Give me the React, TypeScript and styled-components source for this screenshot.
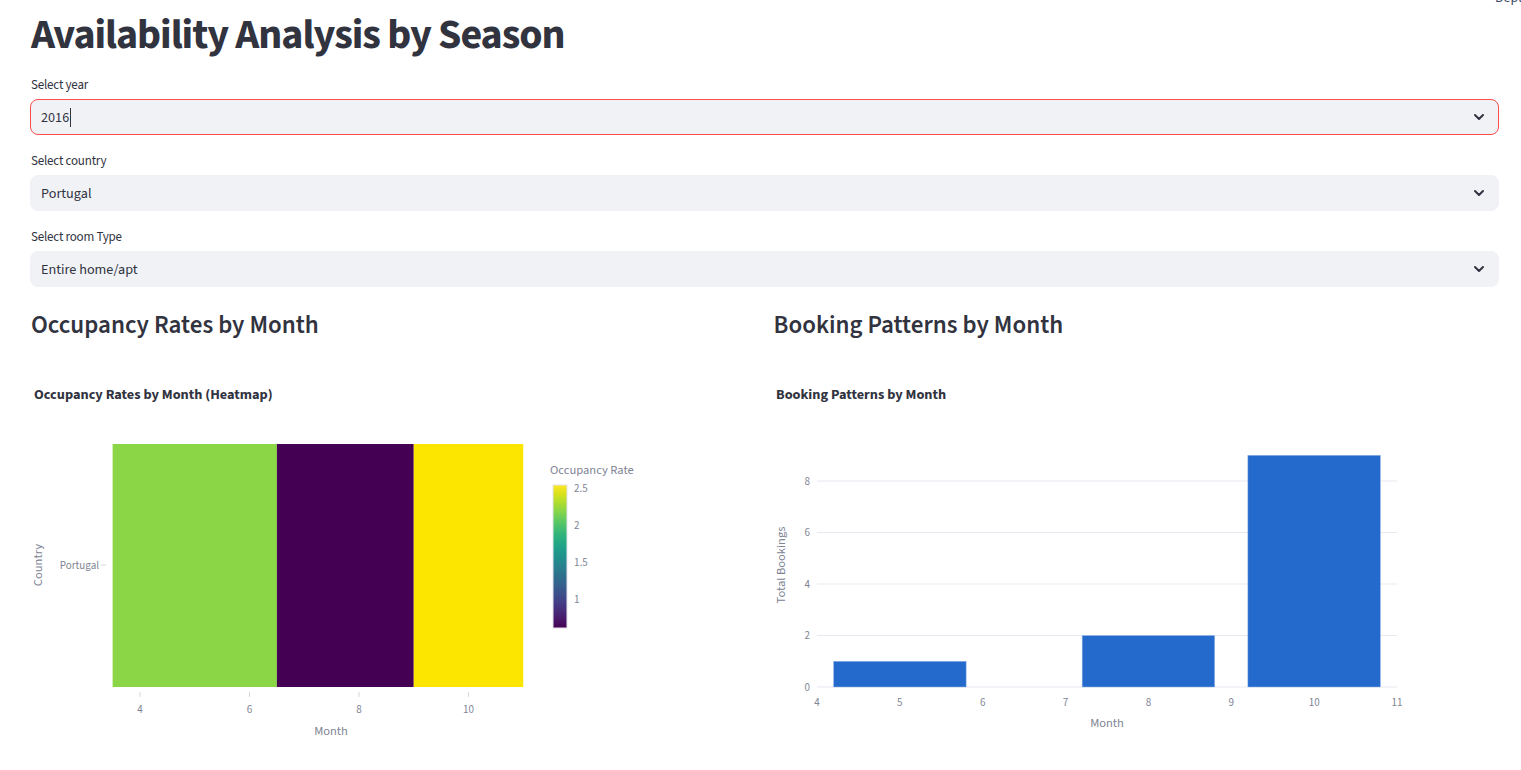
import React from 'react';
import styled, { createGlobalStyle } from 'styled-components';

const FONT = `'Source Sans Pro', 'Source Sans 3', Lato, 'Noto Sans', sans-serif`;
const TEXT = '#31333F';
const MUTED = '#808495';

const GlobalStyle = createGlobalStyle`
  html, body {
    margin: 0;
    padding: 0;
    background: #ffffff;
    overflow: hidden;
  }
  body {
    font-family: ${FONT};
    color: ${TEXT};
  }
`;

const Page = styled.div`
  position: relative;
  width: 1521px;
  height: 770px;
  box-sizing: border-box;
  padding: 9px 22px 0 30px;
  display: flex;
  flex-direction: column;
`;

const DeployTag = styled.div`
  position: absolute;
  top: -12px;
  left: 1495px;
  font-size: 14px;
  color: #3b4a6b;
  white-space: nowrap;
`;

const Title = styled.h1`
  margin: 0 0 13px 0;
  padding-left: 1px;
  font-size: 42px;
  line-height: 53px;
  font-weight: 700;
  letter-spacing: -1.05px;
  color: ${TEXT};
`;

const Form = styled.div`
  display: flex;
  flex-direction: column;
  gap: 16px;
`;

const Field = styled.div`
  display: flex;
  flex-direction: column;
`;

const FieldLabel = styled.label`
  height: 20px;
  margin-bottom: 4px;
  padding-left: 1px;
  font-size: 13px;
  line-height: 20px;
  letter-spacing: -0.2px;
  color: ${TEXT};
`;

const SelectBox = styled.div<{ $focused?: boolean }>`
  height: 36px;
  box-sizing: border-box;
  display: flex;
  align-items: center;
  padding: 0 12px 0 10px;
  background: #f0f2f6;
  border: 1px solid ${(p) => (p.$focused ? '#ff4b4b' : '#f0f2f6')};
  border-radius: 8px;
`;

const SelectValue = styled.span`
  flex: 1;
  display: flex;
  align-items: center;
  font-size: 14.2px;
  color: ${TEXT};
`;

const Caret = styled.span`
  display: inline-block;
  width: 0;
  height: 19px;
  margin-left: 1px;
  border-left: 1px solid ${TEXT};
`;

const Chevron = styled.svg`
  width: 14px;
  height: 14px;
  flex: none;
`;

const Columns = styled.div`
  margin-top: 16px;
  display: grid;
  grid-template-columns: 1fr 1fr;
  gap: 16px;
`;

const Column = styled.div`
  display: flex;
  flex-direction: column;
  min-width: 0;
`;

const ColumnHeader = styled.h3`
  margin: 0 0 13px 0;
  padding-left: 1px;
  height: 44px;
  font-size: 25px;
  line-height: 44px;
  font-weight: 600;
  color: ${TEXT};
`;

const ChartFrame = styled.svg`
  display: block;
  width: 726px;
  height: 400px;
  font-family: ${FONT};
`;

const ChartTitle = styled.text`
  fill: ${TEXT};
  font-size: 14.3px;
  font-weight: 700;
`;

const TickLabel = styled.text`
  fill: ${MUTED};
  font-size: 11px;
`;

const AxisTitle = styled.text`
  fill: ${MUTED};
  font-size: 12.5px;
`;

const VIRIDIS = [
  '#440154', '#48186a', '#472d7b', '#424086', '#3b528b', '#33638d', '#2c728e', '#26828e', '#21918c',
  '#1fa088', '#28ae80', '#3fbc73', '#5ec962', '#84d44b', '#addc30', '#d8e219', '#fde725',
];

function ChevronDown () {
  return (
    <Chevron viewBox='0 0 14 14'>
      <path d='M3 5l4 4 4-4' fill='none' stroke={TEXT} strokeWidth='2' strokeLinecap='round' strokeLinejoin='round' />
    </Chevron>
  );
}

function Select ({ label, value, focused }: { label: string, value: string, focused?: boolean }) {
  return (
    <Field>
      <FieldLabel>{label}</FieldLabel>
      <SelectBox $focused={focused}>
        <SelectValue>
          {value}
          {focused && <Caret />}
        </SelectValue>
        <ChevronDown />
      </SelectBox>
    </Field>
  );
}

// heatmap geometry, in svg coords
const heatX = (m: number) => 110 + (m - 4) * 54.75;
const HEAT_TOP = 84;
const HEAT_BOTTOM = 327;
const cells = [
  { from: 3.5, to: 6.5, color: '#8bd646' },
  { from: 6.5, to: 9, color: '#440154' },
  { from: 9, to: 11, color: '#fce600' },
];
const CB_TOP = 125;
const CB_BOTTOM = 268;
const cbY = (v: number) => CB_BOTTOM - ((v - 0.61) / (2.55 - 0.61)) * (CB_BOTTOM - CB_TOP);

function Heatmap () {
  return (
    <ChartFrame viewBox='0 0 726 400'>
      <defs>
        <linearGradient id='viridis' x1='0' y1='1' x2='0' y2='0'>
          {VIRIDIS.map((c, i) => (
            <stop key={c} offset={i / (VIRIDIS.length - 1)} stopColor={c} />
          ))}
        </linearGradient>
      </defs>
      <ChartTitle x={4} y={39}>Occupancy Rates by Month (Heatmap)</ChartTitle>

      {cells.map((c) => (
        <rect key={c.from} x={heatX(c.from)} y={HEAT_TOP} width={heatX(c.to) - heatX(c.from)} height={HEAT_BOTTOM - HEAT_TOP} fill={c.color} />
      ))}

      {[4, 6, 8, 10].map((m) => (
        <g key={m}>
          <line x1={heatX(m)} x2={heatX(m)} y1={332} y2={337} stroke='#d5d8de' strokeWidth={1} />
          <TickLabel x={heatX(m)} y={349} textAnchor='middle' dominantBaseline='central'>{m}</TickLabel>
        </g>
      ))}
      <AxisTitle x={301} y={371} textAnchor='middle' dominantBaseline='central'>Month</AxisTitle>

      <line x1={71} x2={76} y1={205} y2={205} stroke='#d5d8de' strokeWidth={1} />
      <TickLabel x={69} y={205} textAnchor='end' dominantBaseline='central'>Portugal</TickLabel>
      <AxisTitle x={8} y={205} textAnchor='middle' dominantBaseline='central' transform='rotate(-90 8 205)'>Country</AxisTitle>

      <AxisTitle x={520} y={110} dominantBaseline='central'>Occupancy Rate</AxisTitle>
      <rect x={523} y={CB_TOP} width={14} height={CB_BOTTOM - CB_TOP} fill='url(#viridis)' stroke='#e4e4ec' strokeWidth={1} />
      {[2.5, 2, 1.5, 1].map((v) => (
        <TickLabel key={v} x={544} y={cbY(v)} dominantBaseline='central'>{v}</TickLabel>
      ))}
    </ChartFrame>
  );
}

// bar chart geometry, in svg coords
const barX = (m: number) => 44 + (m - 4) * 82.857;
const barY = (v: number) => 327 - v * 25.75;
const bookings = [
  { month: 5, total: 1 },
  { month: 8, total: 2 },
  { month: 10, total: 9 },
];

function BookingBars () {
  return (
    <ChartFrame viewBox='0 0 726 400'>
      <ChartTitle x={3} y={39}>Booking Patterns by Month</ChartTitle>

      {[0, 2, 4, 6, 8].map((v) => (
        <g key={v}>
          <line x1={barX(4)} x2={barX(11)} y1={barY(v)} y2={barY(v)} stroke='#e6e9ef' strokeWidth={1} />
          <TickLabel x={37} y={barY(v)} textAnchor='end' dominantBaseline='central'>{v}</TickLabel>
        </g>
      ))}

      {bookings.map((b) => (
        <rect
          key={b.month}
          x={barX(b.month - 0.8)}
          y={barY(b.total)}
          width={barX(b.month + 0.8) - barX(b.month - 0.8)}
          height={barY(0) - barY(b.total)}
          fill='#2469cc'
          stroke='#9fbbe6'
          strokeWidth={0.5}
        />
      ))}

      {[4, 5, 6, 7, 8, 9, 10, 11].map((m) => (
        <TickLabel key={m} x={barX(m)} y={342} textAnchor='middle' dominantBaseline='central'>{m}</TickLabel>
      ))}
      <AxisTitle x={334} y={363} textAnchor='middle' dominantBaseline='central'>Month</AxisTitle>
      <AxisTitle x={8} y={205} textAnchor='middle' dominantBaseline='central' transform='rotate(-90 8 205)'>Total Bookings</AxisTitle>
    </ChartFrame>
  );
}

export default function App () {
  return (
    <>
      <GlobalStyle />
      <Page>
        <DeployTag>Deploy</DeployTag>
        <Title>Availability Analysis by Season</Title>
        <Form>
          <Select label='Select year' value='2016' focused />
          <Select label='Select country' value='Portugal' />
          <Select label='Select room Type' value='Entire home/apt' />
        </Form>
        <Columns>
          <Column>
            <ColumnHeader>Occupancy Rates by Month</ColumnHeader>
            <Heatmap />
          </Column>
          <Column>
            <ColumnHeader>Booking Patterns by Month</ColumnHeader>
            <BookingBars />
          </Column>
        </Columns>
      </Page>
    </>
  );
}
